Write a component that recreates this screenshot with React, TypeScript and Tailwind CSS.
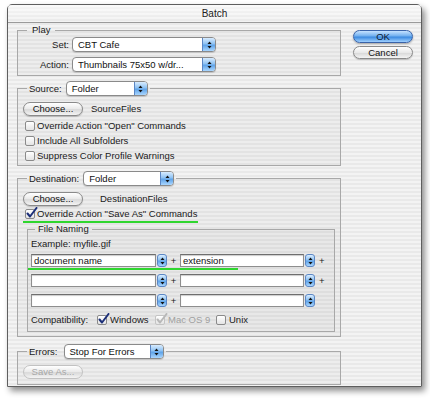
import type { ReactNode } from 'react'

const STRIPES =
  'bg-[repeating-linear-gradient(to_bottom,#f3f3f3_0px,#f3f3f3_2px,#e9e9e9_2px,#e9e9e9_4px)]'

function Arrows({ className = '' }: { className?: string }) {
  return (
    <svg width="5" height="8" viewBox="0 0 5 8" className={className}>
      <path d="M2.5 0.5 L4.5 3 L0.5 3 Z" fill="#111" />
      <path d="M2.5 7.5 L4.5 5 L0.5 5 Z" fill="#111" />
    </svg>
  )
}

function Popup({ value, width }: { value: string; width: number }) {
  return (
    <div
      className="flex h-[15px] items-stretch rounded-[4px] border border-[#8a8a8a] bg-white shadow-[0_1px_1px_rgba(0,0,0,0.15)]"
      style={{ width }}
    >
      <span className="flex-1 truncate pl-[5px] leading-[13px] text-[#111]">{value}</span>
      <span className="flex w-[13px] items-center justify-center rounded-r-[3px] border-l border-[#5b86c4] bg-[linear-gradient(to_bottom,#d8ecff,#8ec2f3_45%,#5fa3e8_55%,#a9d6ff)]">
        <Arrows />
      </span>
    </div>
  )
}

function Field({ value = '', width }: { value?: string; width: number }) {
  return (
    <div className="flex items-center gap-[1px]">
      <div
        className="h-[13px] border border-[#8e8e8e] border-t-[#6e6e6e] bg-white pl-[2px] leading-[11px] text-[#111] shadow-[inset_0_1px_1px_rgba(0,0,0,0.2)]"
        style={{ width }}
      >
        {value}
      </div>
      <span className="flex h-[13px] w-[10px] items-center justify-center rounded-[3px] border border-[#5b86c4] bg-[linear-gradient(to_bottom,#d8ecff,#8ec2f3_45%,#5fa3e8_55%,#a9d6ff)]">
        <Arrows />
      </span>
    </div>
  )
}

function Checkbox({ checked = false, disabled = false }: { checked?: boolean; disabled?: boolean }) {
  return (
    <span
      className={`relative inline-block h-[10px] w-[10px] shrink-0 rounded-[2px] border bg-[linear-gradient(to_bottom,#ffffff,#e4e4e4)] ${
        disabled ? 'border-[#c4c4c4]' : 'border-[#8a8a8a]'
      }`}
    >
      {checked && (
        <svg width="12" height="12" viewBox="0 0 12 12" className="absolute -top-[3px] left-[0px]">
          <path
            d="M1.5 6.5 L4 9.5 L10.5 1"
            fill="none"
            stroke={disabled ? '#b8b8b8' : '#1c2f78'}
            strokeWidth="2"
            strokeLinecap="round"
            strokeLinejoin="round"
          />
        </svg>
      )}
    </span>
  )
}

function CheckRow({ label, checked }: { label: string; checked?: boolean }) {
  return (
    <div className="flex h-[15px] items-center gap-[2px] pl-[7px]">
      <Checkbox checked={checked} />
      <span>{label}</span>
    </div>
  )
}

function PillButton({ children, disabled = false }: { children: ReactNode; disabled?: boolean }) {
  return (
    <div
      className={`flex h-[14px] w-[60px] items-center justify-center rounded-full border bg-[linear-gradient(to_bottom,#ffffff,#e9e9e9_50%,#d9d9d9_55%,#f4f4f4)] ${
        disabled ? 'border-[#c2c2c2] text-[#a8a8a8]' : 'border-[#8a8a8a] text-[#111] shadow-[0_1px_1px_rgba(0,0,0,0.2)]'
      }`}
    >
      {children}
    </div>
  )
}

function Group({ legend, children, className = '' }: { legend: ReactNode; children: ReactNode; className?: string }) {
  return (
    <fieldset className={`border border-[#a8a8a8] bg-black/[0.025] ${className}`}>
      <legend className="ml-[9px] flex items-center px-[2px]">{legend}</legend>
      {children}
    </fieldset>
  )
}

export default function App() {
  return (
    <div className="h-[398px] w-[430px] bg-white pl-[7px] pt-[4px] font-['Liberation_Sans',Arial,sans-serif] text-[9.5px] leading-[12px] text-[#1a1a1a]">
      <div
        className={`h-[383px] w-[415px] rounded-t-[5px] border border-[#5e5e5e] shadow-[3px_4px_6px_rgba(0,0,0,0.45)] ${STRIPES}`}
      >
        <div className="flex h-[18px] items-center justify-center border-b border-[#9a9a9a] bg-[linear-gradient(to_bottom,rgba(255,255,255,0.6),rgba(255,255,255,0))] text-[10px] text-[#222]">
          Batch
        </div>

        <div className="flex pl-[9px] pt-[1px]">
          <div className="w-[324px]">
            {/* Play */}
            <Group legend={<span className="px-[3px]">Play</span>} className="pb-[3px]">
              <div className="mt-[1px] flex flex-col gap-[5px]">
                <div className="flex items-center">
                  <span className="w-[54px] pr-[3px] text-right">Set:</span>
                  <Popup value="CBT Cafe" width={144} />
                </div>
                <div className="flex items-center">
                  <span className="w-[54px] pr-[3px] text-right">Action:</span>
                  <Popup value="Thumbnails 75x50 w/dr..." width={144} />
                </div>
              </div>
            </Group>

            {/* Source */}
            <Group
              className="mt-[5px] pb-[2px]"
              legend={
                <>
                  <span className="mr-[4px]">Source:</span>
                  <Popup value="Folder" width={82} />
                </>
              }
            >
              <div className="mt-[6px] flex items-center pl-[5px]">
                <PillButton>Choose...</PillButton>
                <span className="ml-[8px]">SourceFiles</span>
              </div>
              <div className="mt-[2px]">
                <CheckRow label={'Override Action "Open" Commands'} />
                <CheckRow label="Include All Subfolders" />
                <CheckRow label="Suppress Color Profile Warnings" />
              </div>
            </Group>

            {/* Destination */}
            <Group
              className="mt-[5px] pb-[4px] pr-[5px]"
              legend={
                <>
                  <span className="mr-[4px]">Destination:</span>
                  <Popup value="Folder" width={91} />
                </>
              }
            >
              <div className="mt-[6px] flex items-center pl-[5px]">
                <PillButton>Choose...</PillButton>
                <span className="ml-[17px]">DestinationFiles</span>
              </div>
              <div className="mt-[2px] flex h-[12px] items-center gap-[2px] pl-[7px]">
                <Checkbox checked />
                <span>Override Action "Save As" Commands</span>
              </div>
              <div className="ml-[5px] mt-[1px] h-[2px] w-[175px] bg-[#2fd62f]" />

              <fieldset className="ml-[9px] border border-[#a8a8a8] bg-black/[0.02] pb-[5px]">
                <legend className="ml-[7px] px-[3px]">File Naming</legend>
                <div className="mt-[3px] h-[12px] pl-[3px]">Example: myfile.gif</div>

                <div className="mt-[4px] flex h-[13px] items-center pl-[3px]">
                  <Field value="document name" width={125} />
                  <span className="w-[13px] text-center">+</span>
                  <Field value="extension" width={124} />
                  <span className="ml-[4px]">+</span>
                </div>
                <div className="mt-[1px] h-[2px] w-[210px] bg-[#2fd62f]" />
                <div className="mt-[4px] flex h-[13px] items-center pl-[3px]">
                  <Field width={125} />
                  <span className="w-[13px] text-center">+</span>
                  <Field width={124} />
                  <span className="ml-[4px]">+</span>
                </div>
                <div className="mt-[7px] flex h-[13px] items-center pl-[3px]">
                  <Field width={125} />
                  <span className="w-[13px] text-center">+</span>
                  <Field width={124} />
                </div>

                <div className="mt-[7px] flex h-[12px] items-center pl-[3px]">
                  <span className="w-[66px]">Compatibility:</span>
                  <Checkbox checked />
                  <span className="ml-[3px] w-[45px]">Windows</span>
                  <Checkbox checked disabled />
                  <span className="ml-[3px] w-[48px] text-[#a0a0a0]">Mac OS 9</span>
                  <Checkbox />
                  <span className="ml-[3px]">Unix</span>
                </div>
              </fieldset>
            </Group>

            {/* Errors */}
            <Group
              className="mt-[7px] pb-[5px]"
              legend={
                <>
                  <span className="mr-[6px]">Errors:</span>
                  <Popup value="Stop For Errors" width={100} />
                </>
              }
            >
              <div className="mt-[6px] pl-[5px]">
                <PillButton disabled>Save As...</PillButton>
              </div>
            </Group>
          </div>

          <div className="ml-[12px] flex w-[60px] flex-col gap-[3px] pt-[6px]">
            <div className="flex h-[13px] items-center justify-center rounded-full border border-[#3a63a8] bg-[linear-gradient(to_bottom,#c6e2ff,#72b0ef_45%,#3c8ae0_55%,#9fd0ff)] text-[#0d1a33] shadow-[0_1px_2px_rgba(0,0,0,0.3)]">
              OK
            </div>
            <div className="flex h-[13px] items-center justify-center rounded-full border border-[#8a8a8a] bg-[linear-gradient(to_bottom,#ffffff,#e9e9e9_50%,#d9d9d9_55%,#f4f4f4)] text-[#111] shadow-[0_1px_1px_rgba(0,0,0,0.2)]">
              Cancel
            </div>
          </div>
        </div>
      </div>
    </div>
  )
}
